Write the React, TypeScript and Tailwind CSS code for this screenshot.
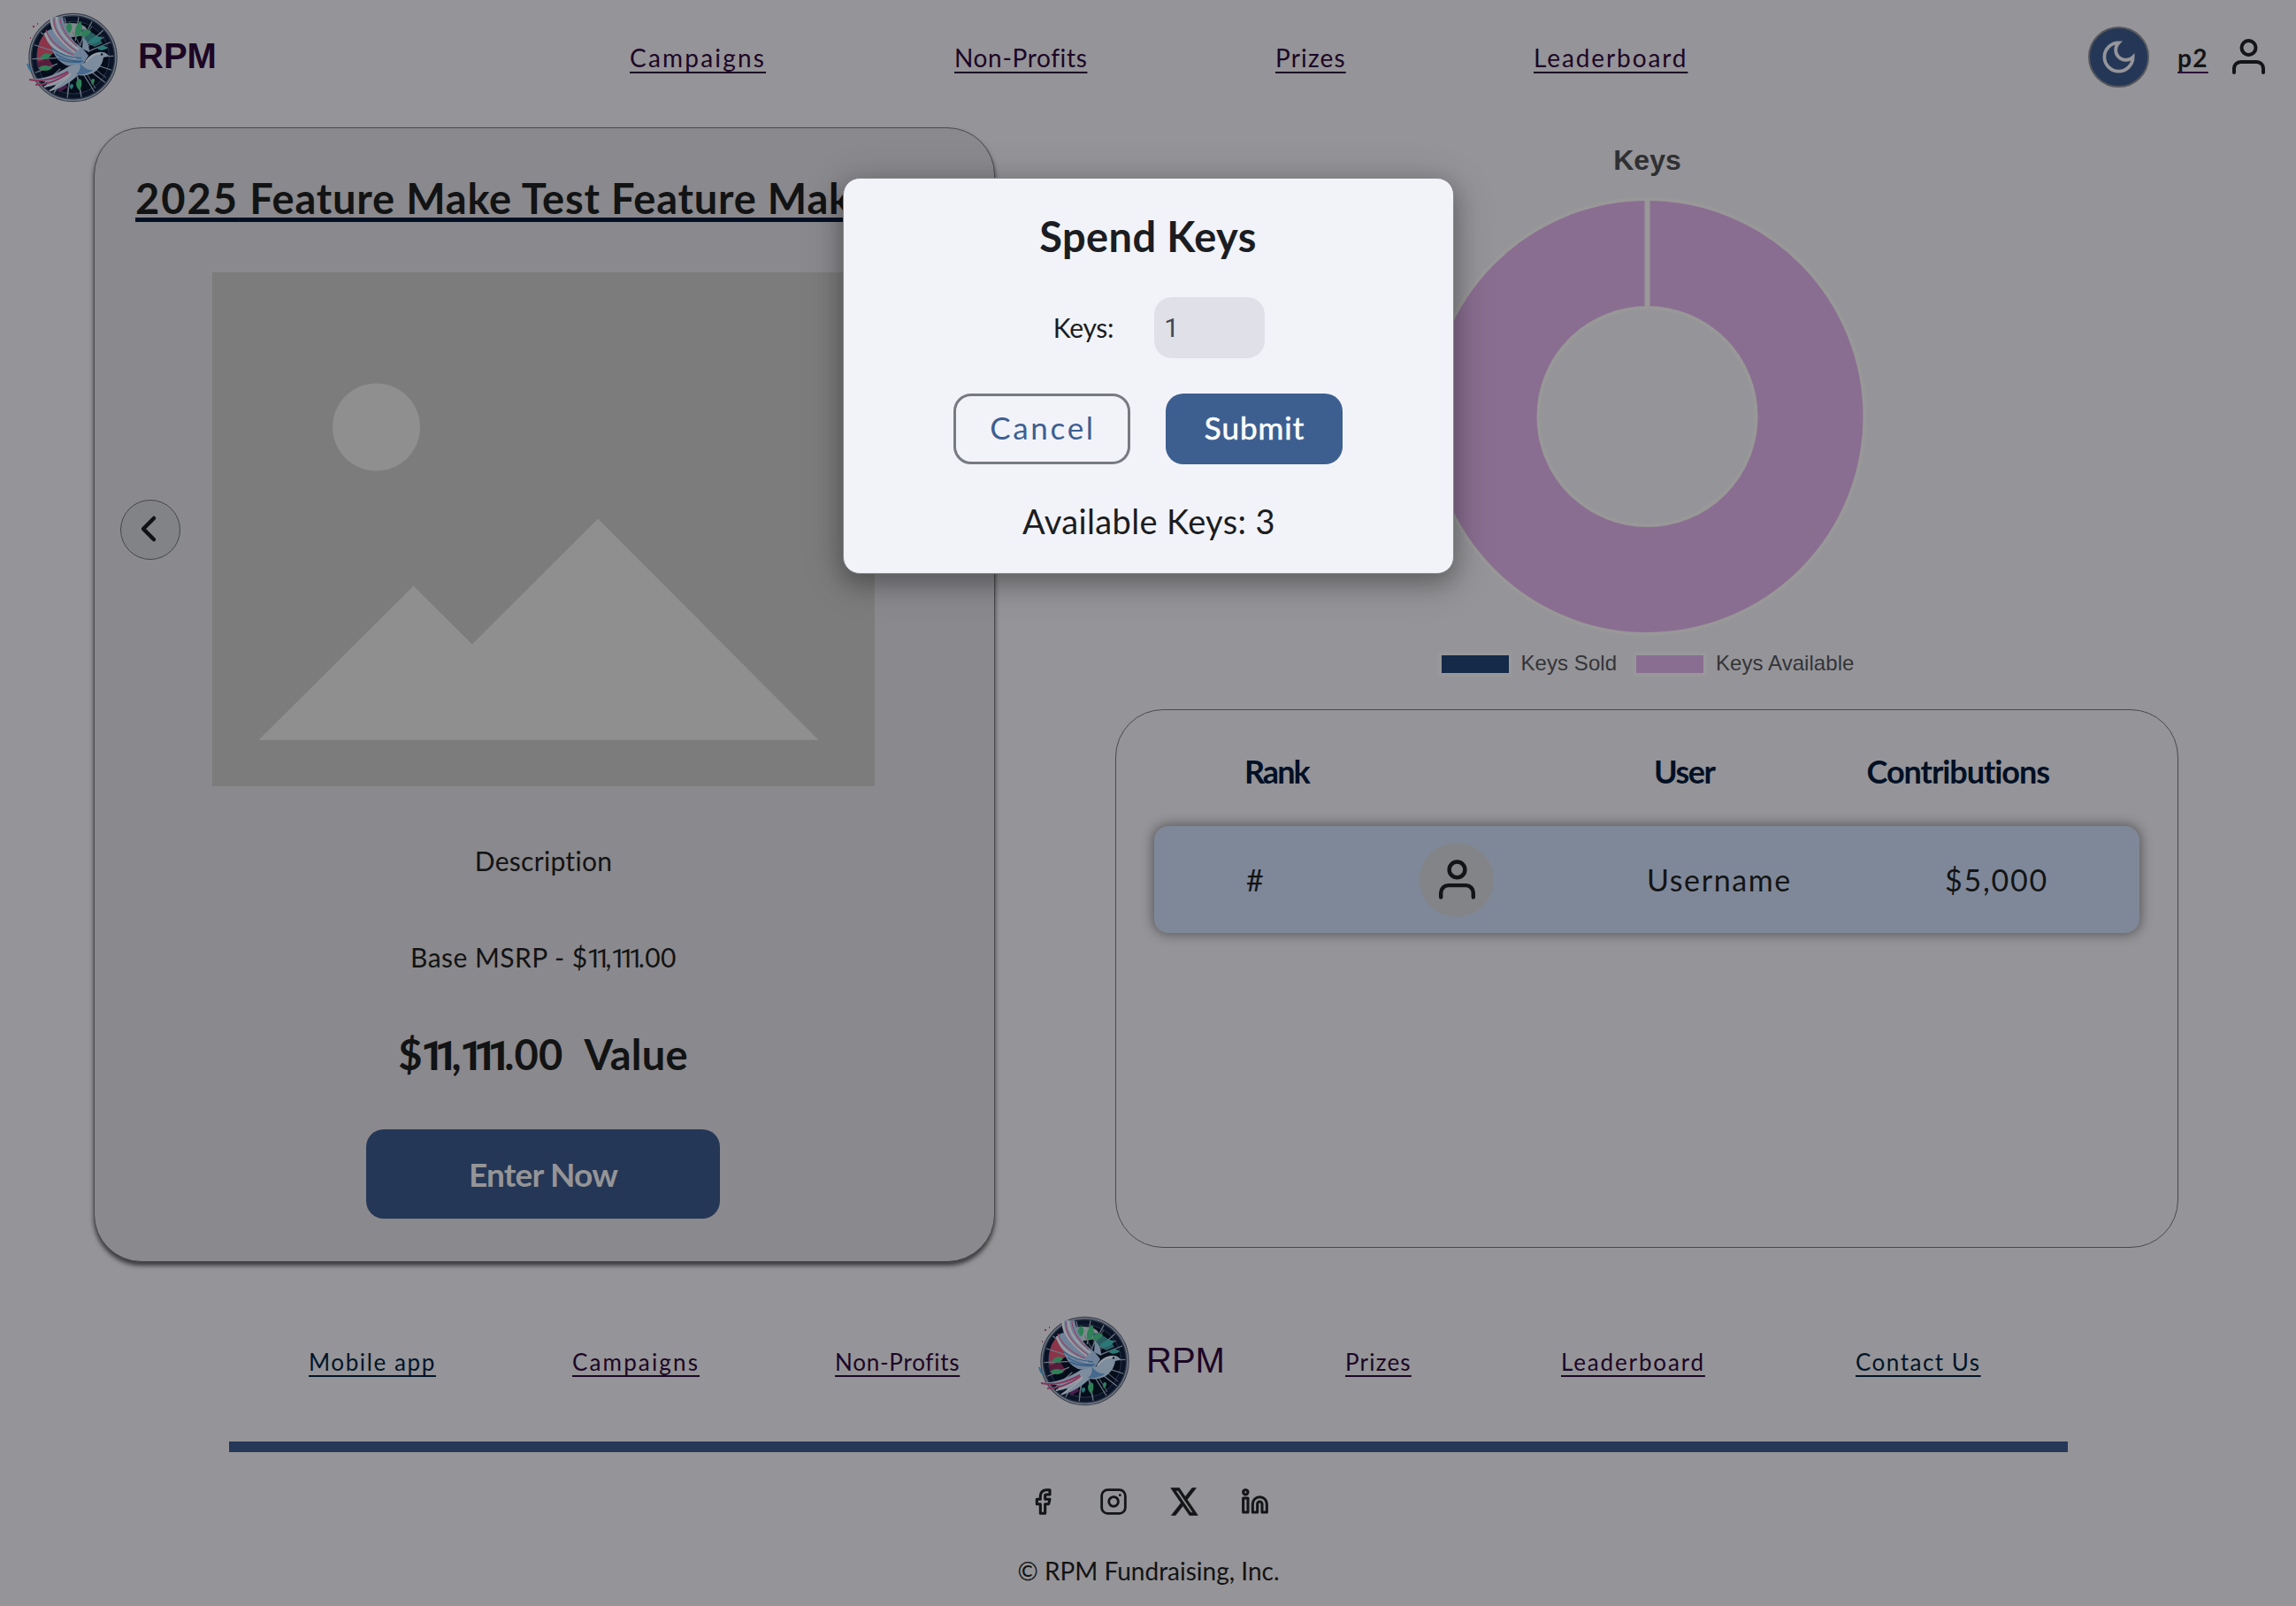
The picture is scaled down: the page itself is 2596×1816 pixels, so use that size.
import React from 'react';
import { Facebook, Instagram, Linkedin } from 'lucide-react';

const SPOKES = Array.from({ length: 18 }, (_, i) => i * 20 + 8);

function Logo() {
  return (
    <svg width="103" height="103" viewBox="0 0 103 103" fill="none" className="shrink-0">
      <circle cx="52.5" cy="51" r="49.6" fill="#757b85" stroke="#3a4150" strokeWidth="1.2" />
      <circle cx="52.5" cy="51" r="47" fill="#0a1426" stroke="#2b3548" strokeWidth="1.4" />
      <circle cx="52.5" cy="51" r="41" fill="#050c1a" stroke="#27324a" strokeWidth="1" />
      <ellipse cx="50" cy="20" rx="18" ry="8" fill="#7f8a8b" />
      <path d="M62 19c10 1 19 7 24 16l-9 4-14-7z" fill="#2a5f62" />
      <path d="M14 36c2-8 8-14 15-16l2 26-18 12c-2-8-1-16 1-22z" fill="#8c3549" />
      <path d="M12 56l13-4 6 10-16 5z" fill="#571d3c" />
      <path d="M34 82l8-7 4 10-9 5z" fill="#4a1d49" />
      <g stroke="#6f7885" strokeWidth="1.2">
        {SPOKES.map((a) => (
          <line key={a} x1="52.5" y1="32" x2="52.5" y2="5" transform={`rotate(${a} 52.5 51)`} />
        ))}
      </g>
      <g stroke="#5e6a78" strokeWidth="1">
        <path d="M52 22l9 16 4-18M50 66l-4 26M57 68l5 25M66 66l12 20M75 62l15 12M60 36l14-20M66 40l22-12" />
      </g>
      <g fill="#2f8058">
        <path d="M45 22c-1-6 1-9 4-11 3 4 3 8 0 12z" />
        <path d="M55 26c-1-8 2-13 6-16 3 6 2 12-2 17z" />
        <path d="M61 25c3-5 8-6 12-4-2 5-7 7-12 6z" />
        <path d="M13 63c5-4 11-4 16 0-5 4-11 4-16 0z" />
        <path d="M15 51c4-5 9-6 13-3-3 5-8 6-13 3z" />
        <path d="M56 80c1-5 4-6 6-3 1 4 0 8-2 11-3-2-4-5-4-8z" />
        <path d="M73 79c0-4 2-5 4-3 0 3-1 5-3 6z" />
      </g>
      <g fill="#2b7878">
        <path d="M70 34c3-6 9-8 16-6-3 6-9 9-16 6z" />
        <path d="M80 41c4-4 8-4 12-1-4 3-8 4-12 1z" />
        <path d="M49 84c0-3 2-4 4-2 0 3-1 4-3 5z" />
      </g>
      <path d="M64 28c5 5 7 10 7 17l-8-4z" fill="#76879b" />
      <path
        d="M30 5c-3 5-3 9-1 14-4 1-7 2-8 4 0 6 3 12 8 17 1 8 7 16 16 20 7 2 13 0 20-3l5-8c-4-6-9-11-15-15-7-8-12-18-14-29l-4 1c-2-1-4-1-7-1z"
        fill="#6f8299"
      />
      <path d="M66 57c5-9 13-13 20-12 3 0 5 2 7 4l-6 2c-1 7-5 13-11 17-6 3-12 4-18 3-8 8-18 14-30 18l5-7-13 3 5-6-21-4c15 1 28-4 44-14 7-2 13-3 18-4z" fill="#7d8d9e" />
      <path d="M28 6c-1 12 7 24 27 39M34 5c0 12 8 25 25 37M21 23c3 12 15 23 35 29" stroke="#9a9da3" strokeWidth="2.6" />
      <path d="M31 7c-1 12 8 25 25 37M22 20c4 12 16 22 31 28M38 7c1 10 8 22 19 31" stroke="#934666" strokeWidth="1.2" />
      <path d="M33 47c9 6 19 9 31 8M36 52c8 4 16 5 26 4M28 40c9 7 20 11 34 12" stroke="#355f86" strokeWidth="1.4" />
      <path d="M60 57c2 5 0 10-4 13 8 1 15-1 20-5-6 1-11-2-16-8z" fill="#46698d" />
      <path d="M3 76c16 3 29-1 44-9M10 82c13 0 25-5 38-13" stroke="#87355c" strokeWidth="2" />
      <path d="M26 89c9-6 17-12 24-19M20 84c12-3 22-9 30-15" stroke="#9a9da3" strokeWidth="1.6" />
      <path d="M67 56c5-7 11-10 18-9" stroke="#9ba0a6" strokeWidth="2" />
      <circle cx="85" cy="47.5" r="1.2" fill="#14161c" />
      <path d="M1 58c1 4 2 6 4 8" stroke="#2e6f94" strokeWidth="2" />
      <path d="M7 16h2M12 13h1M4 29h1" stroke="#7d3350" strokeWidth="2" />
    </svg>
  );
}

function UserIcon({ className }: { className: string }) {
  return (
    <svg viewBox="0 0 37 40" fill="none" stroke="currentColor" strokeWidth="4" strokeLinecap="round" className={className}>
      <circle cx="18.5" cy="10" r="8" />
      <path d="M2 38v-4.500a7.500 7.500 0 0 1 7.500-7.500h18a7.500 7.500 0 0 1 7.500 7.500v4.500" />
    </svg>
  );
}

function MoonIcon() {
  return (
    <svg width="43" height="43" viewBox="0 0 24 24" fill="none" stroke="#95959a" strokeWidth="2.1">
      <path d="M12 3a6 6 0 0 0 9 9 9 9 0 1 1-9-9Z" />
    </svg>
  );
}

function XIcon() {
  return (
    <svg width="34" height="38" viewBox="0 0 24 24" preserveAspectRatio="none" fill="#141517" stroke="#141517" strokeWidth="0.4">
      <path d="M18.244 2.250h3.308l-7.227 8.260 8.502 11.240H16.170l-5.214-6.817L4.990 21.750H1.680l7.730-8.835L1.254 2.250H8.080l4.713 6.231zm-1.161 17.520h1.833L7.084 4.126H5.117z" />
    </svg>
  );
}

function Header() {
  const link = 'text-[#1c0626] underline decoration-2 underline-offset-[5px]';
  return (
    <header className="flex h-32 items-center">
      <div className="flex w-[711px] items-center pl-[30px]">
        <div className="mt-[2px]">
          <Logo />
        </div>
        <span className="ml-[23px] pb-[2px] font-['Liberation_Sans'] text-[40px] font-bold leading-[48px] text-[#1c0626]">RPM</span>
      </div>
      <nav className="grid grid-cols-[367px_363px_292px_190px] pl-px pt-[2px] text-[28px] leading-[40px]">
        <a className={`${link} tracking-[2.2px]`}>Campaigns</a>
        <a className={`${link} tracking-[0.65px]`}>Non-Profits</a>
        <a className={`${link} tracking-[1.15px]`}>Prizes</a>
        <a className={`${link} tracking-[1.9px]`}>Leaderboard</a>
      </nav>
      <div className="ml-auto flex items-center pr-[35px]">
        <div className="flex h-[69px] w-[69px] items-center justify-center rounded-full border-2 border-[#55575d] bg-[#253756]">
          <MoonIcon />
        </div>
        <a className="ml-[32px] w-9 pt-[2px] text-[28px] font-bold leading-[40px] tracking-[1.3px] text-[#141517] underline decoration-[#2a1038] decoration-2 underline-offset-[5px]">
          p2
        </a>
        <UserIcon className="ml-[26px] h-10 w-[37px] text-[#141517]" />
      </div>
    </header>
  );
}

function PlaceholderImage() {
  return (
    <svg width="749" height="581" viewBox="240 308 749 581" className="shrink-0">
      <rect x="240" y="308" width="749" height="581" fill="#7c7c7c" />
      <circle cx="425.5" cy="483" r="49.500" fill="#8f8f8f" />
      <path d="M292.500 836.700 467.500 662.500 533.900 728.500 676 586.500 925.500 836.700Z" fill="#8f8f8f" />
    </svg>
  );
}

function PrizeCard() {
  return (
    <section className="flex h-[1283px] w-[1019px] flex-col items-center rounded-[54px] border-[1.5px] border-[#4a4a4e] bg-[#8a898d] pt-[49px] text-[#121314] shadow-[0_4px_5px_0_#3b3b3e]">
      <h1 className="w-full overflow-hidden whitespace-nowrap pl-[46px] pr-[30px] text-[47px] font-bold leading-[60px] tracking-[0.8px]">
        <span className="underline decoration-[#001024] decoration-[5px] underline-offset-[4px]">
          <span className="tracking-[2px]">2025</span> Feature Make Test Feature Make
        </span>
      </h1>
      <div className="mt-[54px] flex w-full items-center pl-[29px]">
        <button className="mr-9 flex h-[68px] w-[68px] shrink-0 items-center justify-center rounded-full border-[1.5px] border-[#48484c] bg-[#828386]">
          <svg width="20" height="32" viewBox="0 0 20 32" fill="none" stroke="#111213" strokeWidth="4.500" strokeLinecap="round" className="-ml-1 -mt-0.5">
            <path d="M16 4 4 16 16 28" strokeLinejoin="round" />
          </svg>
        </button>
        <PlaceholderImage />
      </div>
      <p className="mt-[62px] pr-[2px] text-[30px] leading-[44px] tracking-[0.3px]">Description</p>
      <p className="mt-[65px] whitespace-nowrap pr-[2px] text-[30px] leading-[44px] tracking-[0.45px]">
        Base MSRP - $<span className="-ml-px mr-px font-[Roboto] tracking-[-6.9px]">11</span>,
        <span className="-ml-px mr-px font-[Roboto] tracking-[-6.9px]">111</span>.00
      </p>
      <p className="mt-[56px] flex gap-[24px] whitespace-nowrap pr-[3px] text-[47px] font-bold leading-[60px] tracking-[0.2px]">
        <span>
          $<span className="-ml-[2px] mr-[3px] font-[Roboto] tracking-[-11.1px]">11</span>,
          <span className="-ml-[2px] mr-[3px] font-[Roboto] tracking-[-11.1px]">111</span>.00
        </span>
        <span>Value</span>
      </p>
      <button className="mr-[3px] mt-[53px] h-[101px] w-[400px] rounded-[20px] bg-[#253756] text-[37px] font-bold tracking-[-0.8px] text-[#959597]">Enter Now</button>
    </section>
  );
}

function KeysChart() {
  return (
    <div className="flex flex-col items-center pt-[17px] font-['Liberation_Sans']">
      <h2 className="pl-px text-[32px] font-bold leading-[40px] text-[#2f3033]">Keys</h2>
      <svg width="500" height="500" viewBox="-250 -250 500 500" fill="none" className="mt-5">
        <g transform="translate(0.5 0)">
          <circle r="184.500" stroke="#989898" strokeWidth="127" />
          <circle r="184.500" stroke="#8a6e91" strokeWidth="119" />
          <path d="M0-248V-121" stroke="#989898" strokeWidth="6" />
        </g>
      </svg>
      <div className="mt-5 flex h-5 items-center pl-[2px] text-2xl leading-5 tracking-[0.05px] text-[#333439]">
        <span className="h-5 w-[76px] bg-[#152a49] ring-4 ring-[#98989a]" />
        <span className="ml-[14px] pb-[2px]">Keys Sold</span>
        <span className="ml-[22px] h-5 w-[76px] bg-[#8a6e91] ring-4 ring-[#98989a]" />
        <span className="ml-[14px] pb-[2px]">Keys Available</span>
      </div>
    </div>
  );
}

function Leaderboard() {
  return (
    <section className="mt-[41px] h-[609px] w-[1202px] rounded-[54px] border-[1.5px] border-[#4a494e] pl-[43px] pt-[47px]">
      <div className="grid w-[1114px] grid-cols-[198px_257px_1fr_auto] pl-[102px] pr-[102px] text-[36px] font-bold leading-[44px] text-[#001025]">
        <span className="tracking-[-2px]">Rank</span>
        <span />
        <span className="pl-[8px] tracking-[-1.5px]">User</span>
        <span className="tracking-[-1.06px]">Contributions</span>
      </div>
      <div className="mt-[40px] grid h-[121px] w-[1114px] grid-cols-[198px_257px_1fr_auto] items-center rounded-2xl bg-[#7f8899] pl-[102px] pr-[103px] text-[34px] leading-[44px] text-[#131415] shadow-[0_0_14px_1px_rgba(0,0,0,0.45)]">
        <span className="pl-[2px]">#</span>
        <span className="flex h-[84px] w-[84px] items-center justify-center rounded-full bg-[#838487]">
          <UserIcon className="h-[45px] w-[41px]" />
        </span>
        <span className="tracking-[1.6px]">Username</span>
        <span className="text-right tracking-[1.8px]">$5,000</span>
      </div>
    </section>
  );
}

function Footer() {
  const link = 'pt-px underline decoration-2 underline-offset-[5px]';
  return (
    <footer className="mt-[62px] flex flex-col">
      <div className="grid h-[104px] grid-cols-[298px_297px_230px_347px_244px_333px_160px] items-center pl-[349px] text-[26px] leading-[40px] text-[#1c0626]">
        <a className={`${link} tracking-[1.6px] text-[#001428]`}>Mobile app</a>
        <a className={`${link} tracking-[2.15px]`}>Campaigns</a>
        <a className={`${link} tracking-[0.75px]`}>Non-Profits</a>
        <div className="flex items-center">
          <Logo />
          <span className="ml-[19px] pb-[3px] font-['Liberation_Sans'] text-[40px] leading-[48px]">RPM</span>
        </div>
        <a className={`${link} tracking-[1.2px]`}>Prizes</a>
        <a className={`${link} tracking-[1.85px]`}>Leaderboard</a>
        <a className={`${link} tracking-[1.5px] text-[#001428]`}>Contact Us</a>
      </div>
      <div className="ml-[259px] mt-[39px] h-3 w-[2079px] bg-[#253858]" />
      <div className="mt-[37px] grid h-[34px] grid-cols-[80px_80px_80px_80px] place-items-center self-center pl-[2px] text-[#141517]">
        <Facebook size={32} strokeWidth={2.3} />
        <Instagram size={32} strokeWidth={2.1} />
        <XIcon />
        <Linkedin size={32} strokeWidth={2.3} />
      </div>
      <p className="mt-[43px] self-center pl-px text-[28px] leading-[40px] text-[#121314]">© RPM Fundraising, Inc.</p>
    </footer>
  );
}

function SpendKeysDialog() {
  return (
    <div className="absolute inset-0 flex items-start justify-center pt-[201px]">
      <div
        role="dialog"
        className="flex h-[448px] w-[691px] flex-col items-center rounded-[19px] border border-[#85868e] bg-[#f2f3f9] pt-[35px] text-[#1b1d22] shadow-[0_9px_26px_2px_rgba(0,0,0,0.28),0_8px_50px_4px_rgba(0,0,0,0.12)]"
      >
        <h2 className="text-[47px] font-bold leading-[60px] tracking-[0.4px]">Spend Keys</h2>
        <div className="mt-[39px] flex items-center pl-[25px]">
          <label className="pb-px text-[30px] leading-[44px] tracking-[-0.3px]">Keys:</label>
          <span className="ml-[46px] flex h-[69px] w-[125px] items-center rounded-[20px] bg-[#e0e0e8] pl-[11px] font-[Roboto] text-[30px] text-[#44464e]">1</span>
        </div>
        <div className="mt-10 flex gap-[40px] text-[35px]">
          <button className="h-20 w-[200px] rounded-[20px] border-[3px] border-[#787a82] pb-[3px] pl-[2px] tracking-[2.7px] text-[#3d5f92]">Cancel</button>
          <button className="h-20 w-[200px] rounded-[20px] bg-[#3d5f90] pb-[3px] pl-px tracking-[1px] text-white [-webkit-text-stroke:0.6px_white]">Submit</button>
        </div>
        <p className="mt-10 pl-[2px] text-[38px] leading-[48px] tracking-[0.37px]">Available Keys: 3</p>
      </div>
    </div>
  );
}

export default function App() {
  return (
    <div className="relative h-[1816px] w-[2596px] overflow-hidden bg-[#959498] font-[Lato,sans-serif]">
      <Header />
      <main className="mt-4 flex h-[1281px] gap-[136px] pl-[106px]">
        <PrizeCard />
        <div>
          <KeysChart />
          <Leaderboard />
        </div>
      </main>
      <Footer />
      <SpendKeysDialog />
    </div>
  );
}
